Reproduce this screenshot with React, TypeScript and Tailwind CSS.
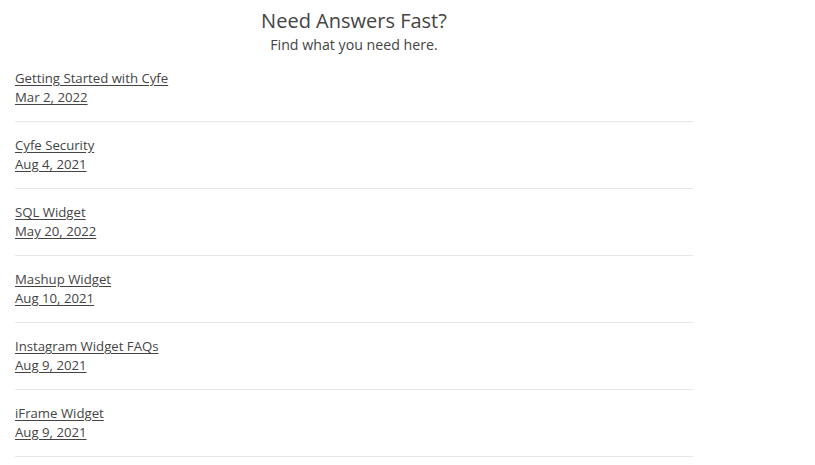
import React from "react";

const articles = [
  { title: "Getting Started with Cyfe", date: "Mar 2, 2022" },
  { title: "Cyfe Security", date: "Aug 4, 2021" },
  { title: "SQL Widget", date: "May 20, 2022" },
  { title: "Mashup Widget", date: "Aug 10, 2021" },
  { title: "Instagram Widget FAQs", date: "Aug 9, 2021" },
  { title: "iFrame Widget", date: "Aug 9, 2021" },
];

const App: React.FC = () => (
  <div className="min-h-screen bg-white font-['Open_Sans',sans-serif] text-[#444]">
    <div className="ml-[15px] w-[678px] pt-[7px]">
      <div className="text-center">
        <h1 className="text-[20px] leading-[28px] text-[#444]">Need Answers Fast?</h1>
        <p className="text-[14.2px] leading-5 text-[#444]">Find what you need here.</p>
      </div>
      <ul>
        {articles.map(a => (
          <li key={a.title} className="border-b border-[#e8e8e8] pt-[14px] pb-[14px] text-[13.2px] leading-[19px]">
            <a href="#" className="block w-fit text-[#444] underline underline-offset-2">{a.title}</a>
            <a href="#" className="block w-fit text-[#444] underline underline-offset-2">{a.date}</a>
          </li>
        ))}
      </ul>
    </div>
  </div>
);

export default App;
